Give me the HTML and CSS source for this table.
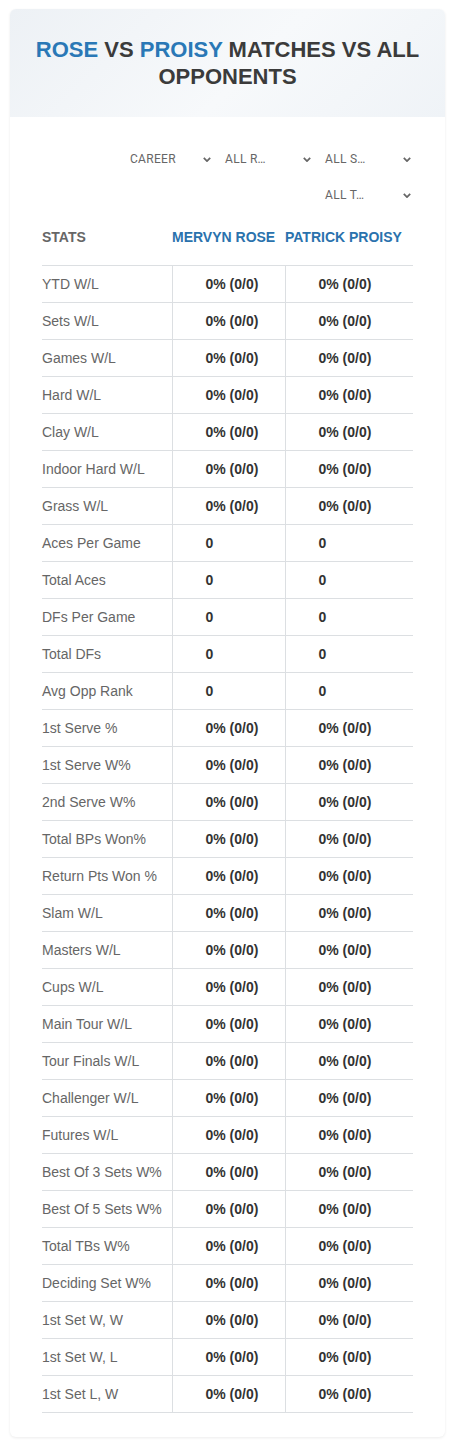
FILE: index.html
```html
<!DOCTYPE html>
<html lang="en">
<head>
    <meta charset="UTF-8">
    <meta name="viewport" content="width=device-width, initial-scale=1.0">
    <title>Rose vs Proisy</title>
    <link rel="stylesheet" href="styles.css">
</head>
<body>
    <div class="card">
        <div class="card-head">
            <h1><span class="blue">ROSE</span> VS <span class="blue">PROISY</span> MATCHES VS ALL OPPONENTS</h1>
        </div>
        <div class="filters">
            <div class="select first"><span>CAREER</span><svg viewBox="0 0 10 6"><path d="M1 1l4 4 4-4"/></svg></div>
            <div class="select"><span>ALL R…</span><svg viewBox="0 0 10 6"><path d="M1 1l4 4 4-4"/></svg></div>
            <div class="select"><span>ALL S…</span><svg viewBox="0 0 10 6"><path d="M1 1l4 4 4-4"/></svg></div>
            <div class="select"><span>ALL T…</span><svg viewBox="0 0 10 6"><path d="M1 1l4 4 4-4"/></svg></div>
        </div>
        <table class="stats">
            <thead>
                <tr>
                    <th class="stat-head">STATS</th>
                    <th class="player">MERVYN ROSE</th>
                    <th class="player">PATRICK PROISY</th>
                </tr>
            </thead>
            <tbody id="rows"></tbody>
        </table>
    </div>

    <script>
        let rows = [
            ['YTD W/L', '0% (0/0)'], ['Sets W/L', '0% (0/0)'], ['Games W/L', '0% (0/0)'],
            ['Hard W/L', '0% (0/0)'], ['Clay W/L', '0% (0/0)'], ['Indoor Hard W/L', '0% (0/0)'],
            ['Grass W/L', '0% (0/0)'], ['Aces Per Game', '0'], ['Total Aces', '0'],
            ['DFs Per Game', '0'], ['Total DFs', '0'], ['Avg Opp Rank', '0'],
            ['1st Serve %', '0% (0/0)'], ['1st Serve W%', '0% (0/0)'], ['2nd Serve W%', '0% (0/0)'],
            ['Total BPs Won%', '0% (0/0)'], ['Return Pts Won %', '0% (0/0)'], ['Slam W/L', '0% (0/0)'],
            ['Masters W/L', '0% (0/0)'], ['Cups W/L', '0% (0/0)'], ['Main Tour W/L', '0% (0/0)'],
            ['Tour Finals W/L', '0% (0/0)'], ['Challenger W/L', '0% (0/0)'], ['Futures W/L', '0% (0/0)'],
            ['Best Of 3 Sets W%', '0% (0/0)'], ['Best Of 5 Sets W%', '0% (0/0)'], ['Total TBs W%', '0% (0/0)'],
            ['Deciding Set W%', '0% (0/0)'], ['1st Set W, W', '0% (0/0)'], ['1st Set W, L', '0% (0/0)'],
            ['1st Set L, W', '0% (0/0)']
        ];

        let body = document.getElementById('rows');
        rows.forEach(function(r) {
            let tr = document.createElement('tr');
            tr.innerHTML = '<td class="label">' + r[0] + '</td><td class="val mid">' + r[1] + '</td><td class="val">' + r[1] + '</td>';
            body.appendChild(tr);
        });
    </script>
</body>
</html>
```

FILE: styles.css
```css
body {
    margin: 0;
    background: #fff;
    font-family: "Liberation Sans", Arial, sans-serif;
}
.card {
    margin: 9px 10px 11px;
    background: #fff;
    border-radius: 6px;
    box-shadow: 0 1px 3px rgba(0, 0, 0, 0.08);
    padding-bottom: 24px;
}
.card-head {
    height: 108px;
    display: flex;
    align-items: center;
    justify-content: center;
    padding: 0 14px;
    border-radius: 6px 6px 0 0;
    background: linear-gradient(135deg, #edf1f5, #f7f9fb 55%, #eff3f7);
}
h1 {
    margin: 0;
    font-size: 22px;
    line-height: 27px;
    text-align: center;
    color: #3b3b3b;
    font-weight: bold;
}
.blue {
    color: #2a78b6;
}
.filters {
    display: flex;
    flex-wrap: wrap;
    justify-content: flex-end;
    margin: 24px 20px 0 100px;
}
.select {
    width: 100px;
    height: 36px;
    display: flex;
    align-items: center;
    justify-content: space-between;
    padding-right: 14px;
    box-sizing: border-box;
    font-family: Roboto, sans-serif;
    font-size: 12px;
    letter-spacing: 0.3px;
    color: #666;
}
.select.first {
    width: 95px;
}
.select svg {
    width: 8px;
    height: 5px;
    fill: none;
    stroke: #666;
    stroke-width: 2.2;
}
.stats {
    width: 371px;
    margin: 0 0 0 32px;
    border-collapse: collapse;
    font-size: 14px;
}
.stats th {
    text-align: left;
    font-weight: bold;
    padding: 16px 0 20px;
    line-height: 16px;
    border-bottom: 1px solid #dcdfe2;
}
.stat-head {
    width: 130px;
    color: #666;
}
.player {
    color: #2a72ad;
}
.stats th:nth-child(2) {
    width: 113px;
}
.stats td {
    height: 36px;
    padding: 0;
    border-bottom: 1px solid #dcdfe2;
}
.label {
    color: #666;
}
.val {
    font-weight: bold;
    color: #333;
    padding-left: 33px !important;
}
.mid {
    border-left: 1px solid #dcdfe2;
    border-right: 1px solid #dcdfe2;
}
```
